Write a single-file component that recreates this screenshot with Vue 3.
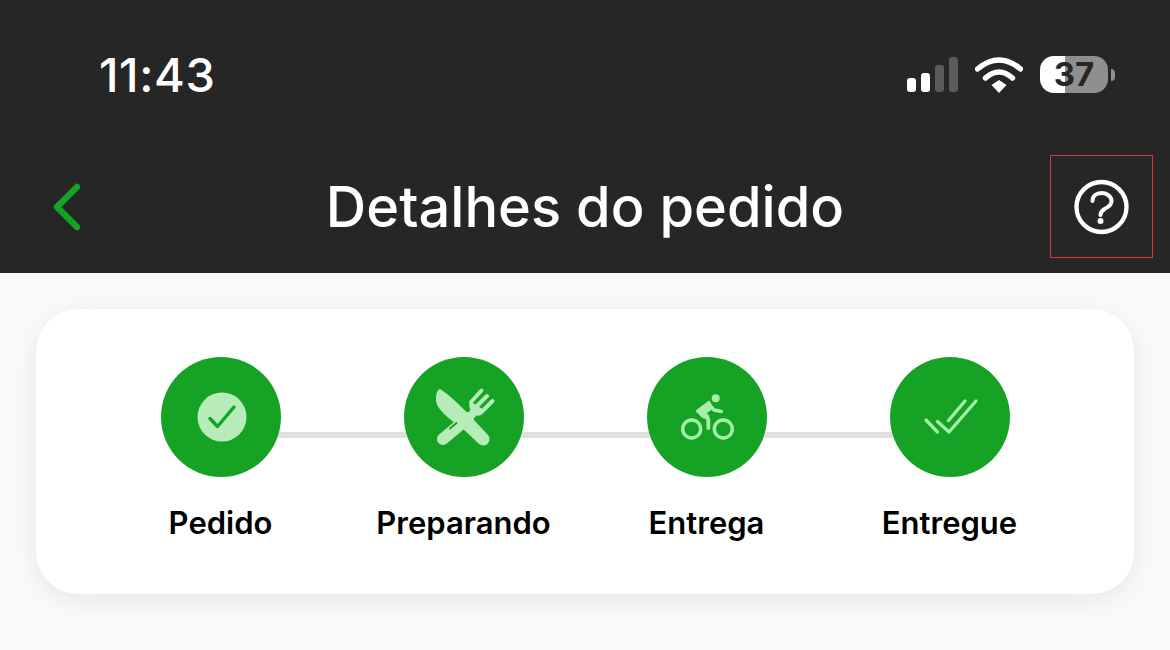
<script setup>
const steps = [
  { id: 'pedido', label: 'Pedido' },
  { id: 'preparando', label: 'Preparando' },
  { id: 'entrega', label: 'Entrega' },
  { id: 'entregue', label: 'Entregue' }
]
</script>

<template>
  <div class="page">
    <header class="header">
      <div class="status">
        <span class="time">11:43</span>
        <div class="status-icons">
          <div class="signal">
            <i class="bar bar-1"></i>
            <i class="bar bar-2"></i>
            <i class="bar bar-3"></i>
            <i class="bar bar-4"></i>
          </div>
          <svg class="wifi" width="48" height="36" viewBox="0 0 48 36">
            <path d="M2.5 12 Q24 -6 45.5 12" fill="none" stroke="#fff" stroke-width="5.5" stroke-linecap="round" />
            <path d="M10.5 21 Q24 9 37.5 21" fill="none" stroke="#fff" stroke-width="5.5" stroke-linecap="round" />
            <path d="M16.5 28 L24 23 L31.5 28 L24 36 Z" fill="#fff" />
          </svg>
          <div class="battery">
            <span class="battery-body">37</span>
            <i class="battery-nub"></i>
          </div>
        </div>
      </div>

      <nav class="nav">
        <button class="back" aria-label="Voltar">
          <svg width="30" height="48" viewBox="0 0 30 48">
            <path d="M24 4 L4 24 L24 44" fill="none" stroke="#16a325" stroke-width="6.4" stroke-linecap="round" stroke-linejoin="round" />
          </svg>
        </button>
        <h1 class="title">Detalhes do pedido</h1>
        <div class="help-cell">
          <button class="help" aria-label="Ajuda">
            <svg width="60" height="60" viewBox="-29.5 -30 60 60">
              <circle r="25" fill="none" stroke="#fff" stroke-width="4.4" />
              <path d="M-9 -6 C-9 -11 -5 -14 0 -14 C6 -14 10 -10 10 -6 C10 -1 6 0 3 2 C0 4 -1 5 -1 8" fill="none" stroke="#fff" stroke-width="4" stroke-linecap="round" />
              <circle cx="-1" cy="14" r="3" fill="#fff" />
            </svg>
          </button>
        </div>
      </nav>
    </header>

    <main class="content">
      <section class="card">
        <div v-for="step in steps" :key="step.id" class="step">
          <div class="circle">
            <svg width="120" height="120" viewBox="0 0 120 120">
              <g v-if="step.id === 'pedido'">
                <circle cx="61" cy="60" r="24.5" fill="#b5ecb8" />
                <path d="M49 61.5 L56.5 69.5 L73 50" fill="none" stroke="#16a325" stroke-width="3.4" stroke-linecap="round" stroke-linejoin="round" />
              </g>
              <g v-else-if="step.id === 'preparando'">
                <path d="M39 82 L64 61" stroke="#b5ecb8" stroke-width="12" stroke-linecap="round" />
                <path d="M60 66 L73 52" stroke="#b5ecb8" stroke-width="8" />
                <path d="M67 45 L77.5 33.5 M72.5 49.5 L83 39 M78 54.5 L88.5 44" stroke="#b5ecb8" stroke-width="4" stroke-linecap="round" />
                <path d="M66 44 C64 51 67 54 70 57 C74 60 79 59 80 53 Z" fill="#b5ecb8" />
                <path d="M36 32 C46 38 61 53 69 62 L84 78 C87 82 85 86 82 88 C79 89 76 88 74 86 L56 69 C46 63 32 52 32 43 C32 37 33 33 36 32 Z" fill="#b5ecb8" />
                <path d="M45.5 72 L53 65.5" stroke="#16a325" stroke-width="1.8" />
              </g>
              <g v-else-if="step.id === 'entrega'">
                <circle cx="44.7" cy="72" r="9" fill="none" stroke="#a6efa8" stroke-width="3.4" />
                <circle cx="76.3" cy="72" r="9" fill="none" stroke="#a6efa8" stroke-width="3.4" />
                <circle cx="68.7" cy="41.3" r="4" fill="#a6efa8" />
                <path d="M62 47 L67 53 L74.5 54.5" fill="none" stroke="#a6efa8" stroke-width="3.4" stroke-linecap="round" stroke-linejoin="round" />
                <path d="M50 54 L62 45 L65 51 L58 56 L61 59 L56 60 Z" fill="#a6efa8" stroke="#a6efa8" stroke-width="2.4" stroke-linejoin="round" />
                <path d="M55 57 L61.3 62 L61.3 71" fill="none" stroke="#a6efa8" stroke-width="3.8" stroke-linecap="round" stroke-linejoin="round" />
              </g>
              <g v-else fill="none" stroke="#a6efa8" stroke-width="3.3" stroke-linecap="round" stroke-linejoin="round">
                <path d="M36 63 L47.5 75" />
                <path d="M47.5 64.5 L59 75 L86 44" />
                <path d="M58.5 63.5 L75 44" />
              </g>
            </svg>
          </div>
          <span class="label">{{ step.label }}</span>
        </div>
      </section>
    </main>
  </div>
</template>

<style scoped>
.page {
  height: 650px;
  overflow: hidden;
  background: #f8f9fb;
  font-family: Inter, "Liberation Sans", sans-serif;
}

.header {
  height: 273px;
  background: #262626;
  color: #fff;
}

.status {
  height: 149px;
  padding: 0 55px 0 99px;
  display: flex;
  align-items: center;
  justify-content: space-between;
}

.time {
  font-size: 47px;
  font-weight: 500;
  letter-spacing: 0.6px;
}

.status-icons {
  display: flex;
  align-items: center;
  gap: 17px;
}

.signal {
  display: flex;
  align-items: flex-end;
  gap: 5px;
  height: 35px;
}

.bar {
  width: 9px;
  border-radius: 3px;
  background: #fff;
}

.bar-1 { height: 14px; }
.bar-2 { height: 19px; }
.bar-3 { height: 27px; background: #5b5b5b; }
.bar-4 { height: 35px; background: #5b5b5b; }

.battery {
  display: flex;
  align-items: center;
  gap: 3px;
}

.battery-body {
  width: 68px;
  height: 37px;
  border-radius: 14px;
  background: linear-gradient(to right, #fff 25px, #8f8f8f 25px);
  color: #262626;
  font-size: 33px;
  font-weight: 700;
  line-height: 37px;
  text-align: center;
}

.battery-nub {
  width: 4px;
  height: 12px;
  border-radius: 0 6px 6px 0;
  background: #8f8f8f;
}

.nav {
  margin-top: 6px;
  height: 103px;
  display: grid;
  grid-template-columns: 1fr auto 1fr;
  align-items: center;
}

.back {
  margin-left: 53px;
  padding: 0;
  border: 0;
  background: none;
  display: flex;
}

.title {
  margin: 0;
  font-size: 56px;
  font-weight: 500;
}

.help-cell {
  display: flex;
  justify-content: flex-end;
  padding-right: 17px;
}

.help {
  width: 103px;
  height: 103px;
  padding: 0;
  border: 1px solid #d43a3a;
  background: none;
  display: flex;
  align-items: center;
  justify-content: center;
}

.content {
  padding: 36px;
}

.card {
  height: 285px;
  box-sizing: border-box;
  padding: 48px 63px 0;
  border-radius: 42px;
  background: #fff;
  box-shadow: 0 6px 26px rgba(0, 0, 0, 0.07);
  display: grid;
  grid-template-columns: repeat(4, 1fr);
  align-items: start;
}

.step {
  position: relative;
  display: flex;
  flex-direction: column;
  align-items: center;
}

.step:not(:last-child)::after {
  content: '';
  position: absolute;
  top: 75px;
  left: 50%;
  width: 100%;
  height: 6px;
  background: #e0e0e0;
}

.circle {
  position: relative;
  z-index: 1;
  width: 120px;
  height: 120px;
  border-radius: 50%;
  background: #16a325;
}

.circle svg {
  display: block;
}

.label {
  margin-top: 27px;
  font-size: 31px;
  font-weight: 600;
  color: #000;
}
</style>
